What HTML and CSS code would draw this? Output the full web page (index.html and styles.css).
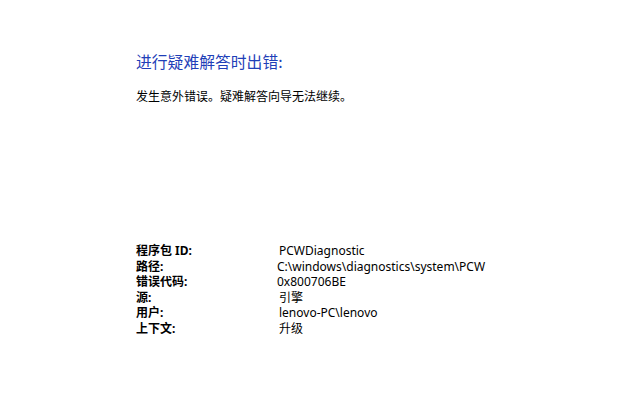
FILE: index.html
```html
<!DOCTYPE html>
<html lang="zh-CN">
<head>
<meta charset="utf-8">
<link rel="stylesheet" href="styles.css">
</head>
<body>
<div class="page">
  <h1 class="title">进行疑难解答时出错:</h1>
  <p class="message">发生意外错误。疑难解答向导无法继续。</p>
  <div class="details">
    <div class="label">程序包 ID:</div><div class="value shift">PCWDiagnostic</div>
    <div class="label">路径:</div><div class="value">C:\windows\diagnostics\system\PCW</div>
    <div class="label">错误代码:</div><div class="value">0x800706BE</div>
    <div class="label">源:</div><div class="value shift">引擎</div>
    <div class="label">用户:</div><div class="value shift">lenovo-PC\lenovo</div>
    <div class="label">上下文:</div><div class="value shift">升级</div>
  </div>
</div>
</body>
</html>
```
FILE: styles.css
```css
html, body {
  margin: 0;
  padding: 0;
  background: #ffffff;
}
body {
  width: 628px;
  height: 416px;
  overflow: hidden;
  font-family: "Noto Sans", "Noto Sans CJK SC", sans-serif;
  color: #000000;
}
.page {
  padding: 51px 0 0 136px;
}
.title {
  margin: 0;
  font-size: 15.8px;
  line-height: 22px;
  font-weight: normal;
  color: #1f3fb8;
  font-family: "Noto Sans CJK SC", "Noto Sans", sans-serif;
}
.message {
  margin: 15px 0 0 0;
  font-size: 12px;
  line-height: 16px;
  font-family: "Noto Sans CJK SC", "Noto Sans", sans-serif;
}
.details {
  margin-top: 139px;
  display: grid;
  grid-template-columns: 141px auto;
  font-size: 12px;
  line-height: 15.6px;
}
.label {
  font-weight: bold;
}
.value.shift {
  padding-left: 2px;
}
```
